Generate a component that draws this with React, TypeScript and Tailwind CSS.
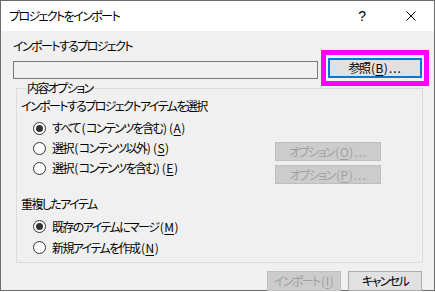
import type { ReactNode } from 'react';

const jp = "font-['Noto_Sans_CJK_JP',sans-serif] [font-feature-settings:'palt'] tracking-[-1.6px]";

// "&" の次の文字がアクセスキー。ASCII 部分は詰めずに表示する
function Label({ text }: { text: string }) {
  const out: ReactNode[] = [];
  let cjk = '';
  const flush = () => {
    if (cjk) out.push(cjk);
    cjk = '';
  };
  for (let i = 0; i < text.length; i++) {
    const c = text[i];
    if (c === '&') {
      flush();
      out.push(
        <span key={i} className="tracking-normal underline underline-offset-2">
          {text[i + 1]}
        </span>,
      );
      i++;
    } else if (c.charCodeAt(0) < 128) {
      flush();
      out.push(
        <span key={i} className={c === '(' ? 'pl-[1.5px] pr-[0.5px] tracking-normal' : 'px-[0.5px] tracking-normal'}>
          {c}
        </span>,
      );
    } else {
      cjk += c;
    }
  }
  flush();
  return <>{out}</>;
}

function Radio({ checked, label }: { checked?: boolean; label: string }) {
  return (
    <div className="flex h-full items-center gap-[6px]">
      <span className="flex h-[13px] w-[13px] shrink-0 items-center justify-center rounded-full border border-[#333333] bg-white">
        {checked && <span className="h-[7px] w-[7px] rounded-full bg-[#333333]" />}
      </span>
      <span>
        <Label text={label} />
      </span>
    </div>
  );
}

function Btn({
  label,
  disabled,
  className = '',
}: {
  label: string;
  disabled?: boolean;
  className?: string;
}) {
  return (
    <div
      className={`flex items-center justify-center border ${
        disabled
          ? 'border-[#bfbfbf] bg-[#cccccc] text-[#a0a0a0]'
          : 'border-[#adadad] bg-[#e1e1e1] text-black'
      } ${className}`}
    >
      <Label text={label} />
    </div>
  );
}

export default function App() {
  return (
    <div className={`h-[292px] w-[435px] bg-white text-[12px] leading-[14px] text-black ${jp}`}>
      <div className="flex h-[291px] w-[435px] flex-col border border-[#6d6d6d] bg-[#f0f0f0]">
        {/* タイトルバー */}
        <div className="flex h-[30px] shrink-0 items-center bg-white pl-[8px]">
          <span>プロジェクトをインポート</span>
          <span className="ml-auto mr-[40px] font-['Liberation_Sans',sans-serif] text-[14px] tracking-normal">?</span>
          <svg width="10" height="10" viewBox="0 0 10 10" className="mr-[18px]" aria-hidden>
            <path d="M0.5 0.5 L9.5 9.5 M9.5 0.5 L0.5 9.5" stroke="#000" strokeWidth="1" />
          </svg>
        </div>

        <div className="flex-1 px-[12px] pt-[8px]">
          <div className="h-[16px]">インポートするプロジェクト</div>

          <div className="mt-[3px] flex items-start">
            <div className="mt-[3px] h-[18px] w-[305px] border border-[#7a7a7a] bg-[#f0f0f0]" />
            <div className="relative ml-auto">
              <Btn label="参照(&B)..." className="h-[20px] w-[94px] border-2 !border-[#0078d7]" />
              {/* 注釈の枠 */}
              <span className="pointer-events-none absolute -bottom-[8px] -left-[7px] -right-[7px] -top-[8px] border-[5px] border-[#ff00ff]" />
            </div>
          </div>

          <fieldset className="ml-[3px] mr-[-1px] mt-[2px] border border-[#dcdcdc] pb-[4px] pl-[4px]">
            <legend className="ml-[5px] px-[1px]">内容オプション</legend>
            <div className="mt-[4px]">インポートするプロジェクトアイテムを選択</div>
            <div className="mt-[5px] flex">
              <div className="flex-1 pl-[12px]">
                <div className="h-[20px]">
                  <Radio checked label="すべて(コンテンツを含む)(&A)" />
                </div>
                <div className="h-[20px]">
                  <Radio label="選択(コンテンツ以外)(&S)" />
                </div>
                <div className="h-[20px]">
                  <Radio label="選択(コンテンツを含む)(&E)" />
                </div>
              </div>
              <div className="mr-[41px] flex flex-col gap-[4px] pt-[24px]">
                <Btn disabled label="オプション(&O)..." className="h-[19px] w-[106px]" />
                <Btn disabled label="オプション(&P)..." className="h-[19px] w-[106px]" />
              </div>
            </div>

            <div className="mt-[13px]">重複したアイテム</div>
            <div className="mt-[5px] pl-[12px]">
              <div className="h-[21px]">
                <Radio checked label="既存のアイテムにマージ(&M)" />
              </div>
              <div className="h-[21px]">
                <Radio label="新規アイテムを作成(&N)" />
              </div>
            </div>
          </fieldset>

          <div className="mt-[8px] flex justify-end gap-[7px]">
            <Btn disabled label="インポート(&I)" className="h-[20px] w-[74px]" />
            <Btn label="キャンセル" className="h-[20px] w-[74px]" />
          </div>
        </div>
      </div>
    </div>
  );
}
